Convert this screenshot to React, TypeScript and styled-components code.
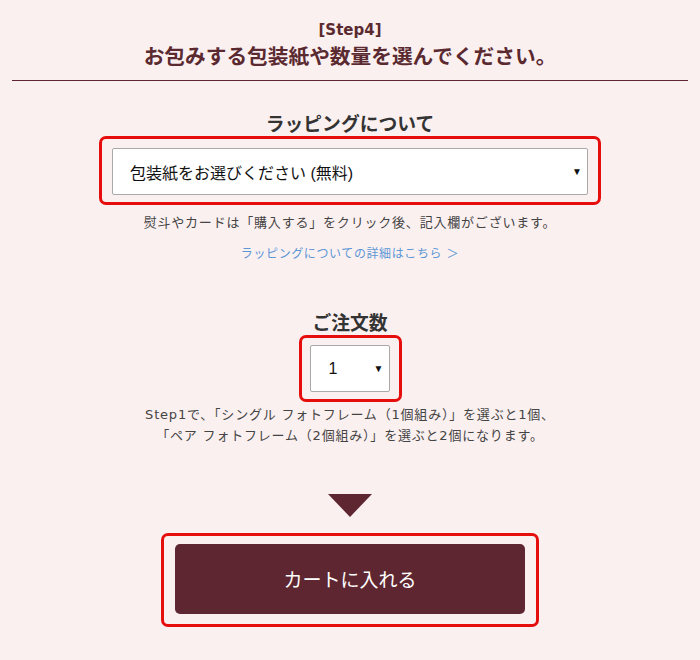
import styled, { createGlobalStyle } from 'styled-components';

const maroon = '#5e2630';

const GlobalStyle = createGlobalStyle`
  html, body {
    margin: 0;
    padding: 0;
    background: #fbf0f0;
  }
  body {
    font-family: 'DejaVu Sans', 'Noto Sans CJK JP', sans-serif;
    color: #333;
  }
`;

const Page = styled('div')({
  width: '700px',
  height: '660px',
  overflow: 'hidden',
  display: 'flex',
  flexDirection: 'column',
  alignItems: 'center',
});

const Header = styled('header')({
  alignSelf: 'stretch',
  margin: '0 12px',
  paddingTop: '20px',
  paddingBottom: '10px',
  borderBottom: `1px solid ${maroon}`,
  display: 'flex',
  flexDirection: 'column',
  alignItems: 'center',
  color: '#5a2a30',
  fontWeight: 700,
});

const StepLabel = styled('div')({
  fontSize: '15px',
  lineHeight: '20px',
});

const Title = styled('h1')({
  margin: 0,
  fontSize: '20.7px',
  lineHeight: '30px',
  fontFamily: "'Noto Sans CJK JP', sans-serif",
  fontWeight: 700,
});

const Section = styled('section')<{ $top: number }>(({ $top }) => ({
  marginTop: `${$top}px`,
  display: 'flex',
  flexDirection: 'column',
  alignItems: 'center',
}));

const Heading = styled('h2')({
  margin: 0,
  fontSize: '18.8px',
  lineHeight: '26px',
  fontWeight: 700,
  color: '#333',
  fontFamily: "'Noto Sans CJK JP', sans-serif",
});

const Highlight = styled('div')<{ $pad: string }>(({ $pad }) => ({
  border: '3px solid #e60d0d',
  borderRadius: '7px',
  padding: $pad,
  display: 'flex',
}));

const Select = styled('div')<{ $width: number; $indent: number }>(
  ({ $width, $indent }) => ({
    width: `${$width}px`,
    height: '47px',
    boxSizing: 'border-box',
    background: '#fff',
    border: '1px solid #a9a9a9',
    borderRadius: '2px',
    display: 'flex',
    alignItems: 'center',
    justifyContent: 'space-between',
    padding: `0 5px 0 ${$indent}px`,
    fontFamily: "'Liberation Sans', 'Noto Sans CJK JP', sans-serif",
    fontSize: '16px',
    color: '#111',
  })
);

const Caret = styled('span')({
  fontSize: '10px',
  color: '#111',
});

const Note = styled('p')<{ $top: number }>(({ $top }) => ({
  margin: `${$top}px 0 0`,
  fontSize: '13px',
  lineHeight: '21px',
  letterSpacing: '0.8px',
  color: '#444',
  textAlign: 'center',
}));

const DetailLink = styled('a')({
  marginTop: '12px',
  fontSize: '12px',
  lineHeight: '18px',
  letterSpacing: '0.6px',
  color: '#5b97d6',
  textDecoration: 'none',
});

const Arrow = styled('div')({
  marginTop: '48px',
  width: 0,
  height: 0,
  borderLeft: '22px solid transparent',
  borderRight: '22px solid transparent',
  borderTop: `23px solid ${maroon}`,
});

const CartButton = styled('button')({
  width: '350px',
  height: '70px',
  border: 'none',
  borderRadius: '5px',
  background: maroon,
  color: '#fff',
  fontSize: '19px',
  fontFamily: "'Noto Sans CJK JP', sans-serif",
  paddingBottom: '3px',
  cursor: 'pointer',
});

export default function App() {
  return (
    <>
      <GlobalStyle />
      <Page>
        <Header>
          <StepLabel>[Step4]</StepLabel>
          <Title>お包みする包装紙や数量を選んでください。</Title>
        </Header>

        <Section $top={29}>
          <Heading>ラッピングについて</Heading>
          <Highlight $pad="9px 10px 7px">
            <Select $width={476} $indent={17}>
              <span>包装紙をお選びください (無料)</span>
              <Caret>▼</Caret>
            </Select>
          </Highlight>
          <Note $top={7}>熨斗やカードは「購入する」をクリック後、記入欄がございます。</Note>
          <DetailLink href="#">ラッピングについての詳細はこちら ＞</DetailLink>
        </Section>

        <Section $top={46}>
          <Heading>ご注文数</Heading>
          <Highlight $pad="7px 9px 7px 8px">
            <Select $width={80} $indent={18}>
              <span>1</span>
              <Caret>▼</Caret>
            </Select>
          </Highlight>
          <Note $top={2}>
            Step1で、「シングル フォトフレーム（1個組み）」を選ぶと1個、
            <br />
            「ペア フォトフレーム（2個組み）」を選ぶと2個になります。
          </Note>
        </Section>

        <Arrow />

        <Section $top={16}>
          <Highlight $pad="8px 11px 10px">
            <CartButton>カートに入れる</CartButton>
          </Highlight>
        </Section>
      </Page>
    </>
  );
}
